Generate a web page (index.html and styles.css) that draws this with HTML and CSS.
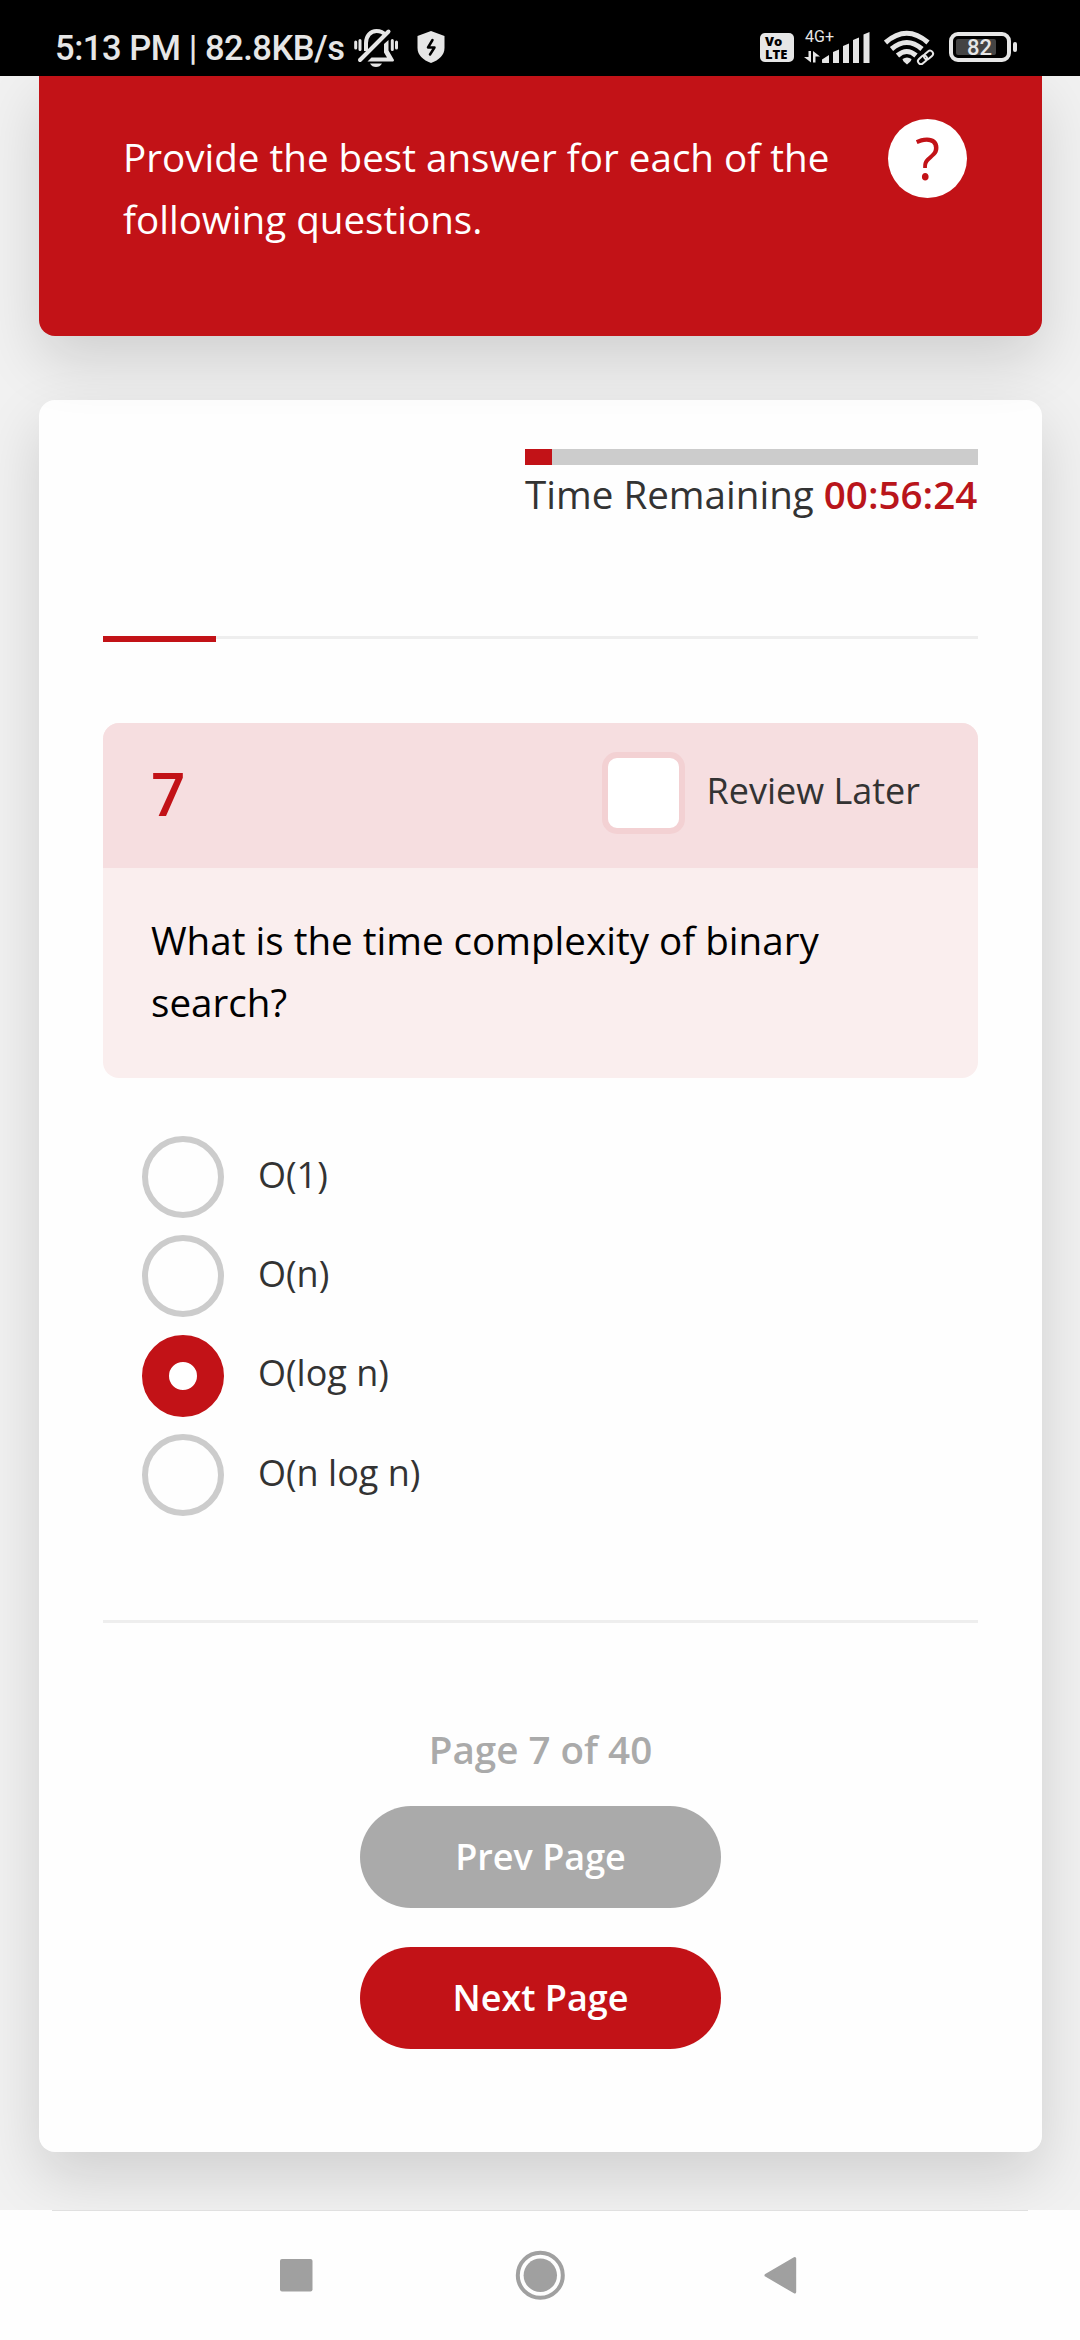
FILE: index.html
```html
<!DOCTYPE html>
<html lang="en">
<head>
<meta charset="utf-8">
<title>Quiz</title>
<link rel="stylesheet" href="styles.css">
</head>
<body>
<div class="statusbar">
  <span class="clock">5:13 PM | 82.8KB/s</span>
  <svg class="bell" width="44" height="40" viewBox="354 28 44 40" fill="none" stroke="#e6e6e6">
    <path stroke-width="3" stroke-linecap="round" d="M355.700 42v6M360 40.500v9M392.300 40.500v9M396.500 42v6"/>
    <path stroke-width="4" d="M366 51V43c0-7 4.500-12 10.500-12 4 0 7 1.500 9 4"/>
    <path stroke-width="4" stroke-linecap="round" d="M360 60L388.500 31.500"/>
    <path fill="#e6e6e6" stroke="none" d="M388.500 40v10.500l5.500 9.500q0 1-1 1.500h-25.500l4-4h15.500l-3-5v-8.500z"/>
    <path fill="#e6e6e6" stroke="none" d="M370 63.500h12q-2 3.500-6 3.500t-6-3.500z"/>
  </svg>
  <svg class="shield" width="28" height="32" viewBox="417 31 28 32">
    <path fill="#e6e6e6" d="M431 31l13.500 5v12c0 7-5.500 12-13.500 15-8-3-13.500-8-13.500-15V36z"/>
    <path fill="none" stroke="#000" stroke-width="2.500" stroke-linecap="round" stroke-linejoin="round" d="M432.500 40l-4.500 7.500h6.500l-4.500 7"/>
  </svg>
  <span class="spacer"></span>
  <span class="volte"><b>Vo</b><b class="lte">LTE</b></span>
  <span class="signal">
    <span class="net">4G+</span>
    <svg width="66" height="32" viewBox="804 31 66 32" fill="#e6e6e6">
      <path d="M808.500 51h2.500v11.500L804 57h4.500zM813 62.500V51l7 5.500h-4.500v6z"/>
      <path d="M822 62.500v-3l7-4.500v7.500q0 .5-.5.500h-6zM833 52l6-2.500V63h-6zM843 46l6-2.500V63h-6zM853 40l6-2.500V63h-6zM863.500 34.500l6-2.500V63h-6z"/>
    </svg>
  </span>
  <svg class="wifi" width="51" height="35" viewBox="884 30 51 35" fill="none" stroke="#e6e6e6">
    <path stroke-width="5" d="M885.500 42.500q21.200-18.500 42.500 0M891.500 49q15.300-13 30.500 0M897.500 55.500q9.300-8 18.500 0"/>
    <path fill="#e6e6e6" stroke="none" d="M902.500 59q4.500-3 9 0 0 2-4.500 5.500-4.500-3.500-4.500-5.500z"/>
    <g stroke="#000" stroke-width="6"><rect x="918" y="56.500" width="10" height="6" rx="3" transform="rotate(-42 923 59.500)"/></g>
    <g stroke-width="2"><rect x="917.500" y="56.800" width="10" height="6" rx="3" transform="rotate(-42 922.500 59.800)"/><rect x="923.500" y="52" width="10" height="6" rx="3" transform="rotate(-42 928.500 55)"/></g>
  </svg>
  <span class="battery"><span class="level">82</span></span><span class="nub"></span>
</div>

<main class="page">
  <header class="intro">
    <p class="intro-text">Provide the best answer for each of the following questions.</p>
    <span class="help">?</span>
  </header>

  <section class="card">
    <div class="timer">
      <div class="timer-track"><div class="timer-fill"></div></div>
      <div class="timer-text">Time Remaining <b>00:56:24</b></div>
    </div>
    <div class="progress"><div class="progress-fill"></div></div>

    <div class="question">
      <div class="question-head">
        <span class="number">7</span>
        <span class="box"></span>
        <span class="review">Review Later</span>
      </div>
      <p class="question-text">What is the time complexity of binary search?</p>
    </div>

    <div class="options">
      <div class="option"><span class="radio"></span><span>O(1)</span></div>
      <div class="option"><span class="radio"></span><span>O(n)</span></div>
      <div class="option selected"><span class="radio checked"></span><span>O(log n)</span></div>
      <div class="option"><span class="radio"></span><span>O(n log n)</span></div>
    </div>

    <div class="pager">
      <div class="pager-text">Page 7 of 40</div>
      <div class="button prev">Prev Page</div>
      <div class="button next">Next Page</div>
    </div>
  </section>
</main>

<nav class="navbar">
  <svg width="1080" height="130" viewBox="0 2210 1080 130" fill="#a0a0a0">
    <path fill="#e0e0e0" d="M52 2210h976v1H52z"/>
    <rect x="280" y="2259" width="32.500" height="32.500" rx="2"/>
    <circle cx="540.300" cy="2275.300" r="22.500" fill="none" stroke="#a0a0a0" stroke-width="4"/>
    <circle cx="540.300" cy="2275.300" r="16.700"/>
    <path stroke="#a0a0a0" stroke-width="3" stroke-linejoin="round" d="M766 2275.300L794.700 2258.500V2292z"/>
  </svg>
</nav>
</body>
</html>
```
FILE: styles.css
```css
* { box-sizing: border-box; }
body {
  margin: 0;
  width: 1080px;
  height: 2340px;
  overflow: hidden;
  display: flex;
  flex-direction: column;
  background: #f1f1f1;
  color: #333;
  font-family: "Open Sans", sans-serif;
  font-size: 36px;
}
p { margin: 0; }

.statusbar {
  position: relative;
  z-index: 3;
  flex: none;
  height: 76px;
  padding: 28px 63px 0 55px;
  display: flex;
  align-items: flex-start;
  background: #000;
  color: #e6e6e6;
  font-family: Roboto, sans-serif;
}
.clock {
  width: 299px;
  font-size: 34.500px;
  font-weight: 500;
  line-height: 41px;
  letter-spacing: -.45px;
  white-space: nowrap;
}
.bell { flex: none; }
.shield { flex: none; margin: 3px 0 0 19px; }
.spacer { flex: 1; }
.volte {
  width: 34px;
  height: 29px;
  margin: 5px 10px 0 0;
  padding: 2px 0 0 5px;
  border-radius: 5px;
  background: #e6e6e6;
  color: #000;
  font: 800 13px/13px "Open Sans", sans-serif;
}
.volte b { display: block; font-weight: 800; }
.signal {
  display: grid;
  width: 66px;
  margin: 3px 14px 0 0;
}
.signal > * { grid-area: 1 / 1; }
.net { padding-left: 1px; font-size: 16px; line-height: 12px; }
.wifi { flex: none; margin: 2px 14px 0 0; }
.battery {
  width: 62px;
  height: 30px;
  margin-top: 4px;
  padding: 3px;
  border: 4px solid #e6e6e6;
  border-radius: 9px;
}
.level {
  display: block;
  width: 40px;
  height: 16px;
  padding-left: 11px;
  border-radius: 2px;
  background: #444;
  font-size: 22px;
  font-weight: 500;
  line-height: 17px;
}
.nub {
  width: 4px;
  height: 10px;
  margin: 14px 0 0 2px;
  border-radius: 2px;
  background: #e6e6e6;
}

.page {
  flex: none;
  height: 2134px;
  padding: 0 38px 0 39px;
}
.intro, .card {
  box-shadow: 0 24px 60px rgba(0, 0, 0, .14);
}
.intro {
  position: relative;
  z-index: 2;
  height: 260px;
  margin-bottom: 64px;
  padding: 50px 75px 0 84px;
  display: flex;
  justify-content: space-between;
  border-radius: 0 0 16px 16px;
  background: #c21217;
  color: #fff;
}
.intro-text {
  width: 730px;
  font-size: 38.600px;
  line-height: 62px;
}
.help {
  width: 79px;
  height: 79px;
  margin-top: -7px;
  border-radius: 50%;
  background: #fff;
  color: #c21217;
  font-size: 58px;
  font-weight: 500;
  line-height: 77px;
  text-align: center;
}
.card {
  height: 1752px;
  padding: 49px 64px 0;
  border-radius: 16px;
  background: #fefefe;
}
.timer { width: 453px; margin-left: auto; }
.timer-track { height: 16px; background: #ccc; }
.timer-fill { width: 27px; height: 16px; background: #c21217; }
.timer-text {
  height: 62px;
  font-size: 38.600px;
  line-height: 58px;
  white-space: nowrap;
}
.timer-text b { color: #b9151b; font-weight: 600; }
.progress {
  height: 3px;
  margin-top: 109px;
  background: #eee;
}
.progress-fill { width: 113px; height: 6px; background: #c21217; }
.question {
  height: 355px;
  margin-top: 84px;
  border-radius: 16px;
  overflow: hidden;
  background: #faeeee;
}
.question-head {
  display: flex;
  height: 145px;
  padding: 29px 58px 0 48px;
  background: #f6dee0;
}
.number {
  flex: 1;
  color: #c21217;
  font-size: 60px;
  font-weight: 600;
  line-height: 82px;
}
.box {
  width: 83px;
  height: 82px;
  border: 6px solid #f3d1d3;
  border-radius: 15px;
  background: #fff;
}
.review { margin-left: 21px; line-height: 78px; }
.question-text {
  padding: 41px 48px 0;
  color: #000;
  font-size: 38.600px;
  line-height: 62px;
}
.options {
  display: grid;
  grid-template-rows: repeat(4, 82px);
  row-gap: 17.400px;
  height: 542px;
  padding: 58px 39px 0;
}
.option { display: flex; gap: 34px; line-height: 78px; }
.option.selected { line-height: 76px; }
.radio {
  width: 82px;
  height: 82px;
  border: 6px solid #ccc;
  border-radius: 50%;
}
.radio.checked { border: 27px solid #c21217; background: #fff; }
.pager {
  display: flex;
  flex-direction: column;
  align-items: center;
  border-top: 3px solid #eee;
  padding-top: 95px;
  font-weight: 600;
}
.pager-text {
  height: 88px;
  color: #aaa;
  font-size: 38.600px;
  line-height: 62px;
}
.button {
  width: 361px;
  height: 102px;
  margin-bottom: 39px;
  border-radius: 51px;
  color: #fff;
  line-height: 102px;
  text-align: center;
}
.prev { background: #aaa; }
.next { background: #c21217; }
.navbar {
  position: relative;
  z-index: 3;
  height: 130px;
  background: #fefefe;
}
.navbar svg { display: block; }
```
